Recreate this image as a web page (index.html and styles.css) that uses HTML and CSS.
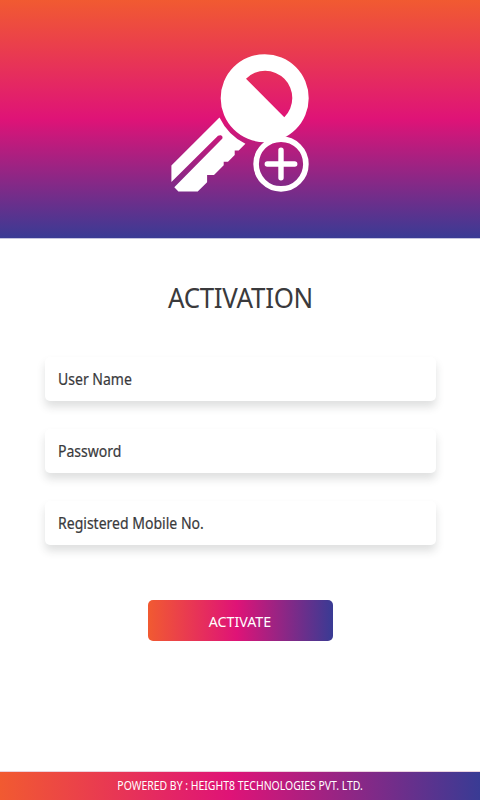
FILE: index.html
```html
<!DOCTYPE html>
<html lang="en">
<head>
<meta charset="utf-8">
<title>Activation</title>
<link rel="stylesheet" href="styles.css">
</head>
<body>
<header class="hero">
<svg class="key" width="142" height="142" viewBox="169 52 142 142" fill="#fff" aria-hidden="true">
<path fill-rule="evenodd" d="M220.7 98.2a44 44 0 1 0 88 0a44 44 0 1 0-88 0ZM246 78.7A27.1 27.1 0 0 1 284.3 117.2Z"/>
<path d="M219.5 117.6L171.4 165.5V182L218 135.8C220.8 134 223.6 136.2 222.2 138.8L174.3 187.3L178.4 191.6H197.7L207.1 182.2V175H214L223.7 165.3V161.7H228L234.7 155V150.5H238.7L245.4 143.7Q228.5 136 219.5 117.6Z"/>
<circle cx="281" cy="164" r="24.9" fill="none" stroke="#fff" stroke-width="5.6"/>
<path d="M267.3 164H294.7M281 150.3V177.7" stroke="#fff" stroke-width="5.4" stroke-linecap="round"/>
</svg>
</header>
<main class="content">
<h1 class="title">ACTIVATION</h1>
<form class="form">
<label class="field"><span class="label">User Name</span></label>
<label class="field"><span class="label">Password</span></label>
<label class="field"><span class="label">Registered Mobile No.</span></label>
<button class="button" type="button"><span class="button-text">ACTIVATE</span></button>
</form>
</main>
<footer class="footer"><span class="footer-text">POWERED BY : HEIGHT8 TECHNOLOGIES PVT. LTD.</span></footer>
</body>
</html>
```
FILE: styles.css
```css
* { box-sizing: border-box; }
body {
  margin: 0;
  height: 800px;
  display: flex;
  flex-direction: column;
  overflow: hidden;
  background: #fff;
  color: #3a3a3c;
  font-family: "Noto Sans", "Open Sans", sans-serif;
}
.hero {
  height: 239px;
  padding: 52px 0 0 169px;
  border-bottom: 1px solid #c4c4df;
  background: linear-gradient(#f15a31, #df1377 50%, #393b94);
  background-clip: padding-box;
}
.key { display: block; }
.content {
  flex: 1;
  display: flex;
  flex-direction: column;
  align-items: center;
}
.title {
  margin: 38px 0 0;
  height: 40px;
  font-size: 28px;
  line-height: 40px;
  font-weight: 400;
  letter-spacing: -0.3px;
  white-space: nowrap;
  transform: scaleX(0.925);
}
.form {
  width: 391px;
  margin-top: 40px;
  display: flex;
  flex-direction: column;
  gap: 28px;
}
.field {
  height: 44px;
  padding-left: 13px;
  border-radius: 5px;
  background: #fff;
  box-shadow: 0 6px 9px rgba(40, 50, 50, 0.15);
  font-size: 15.5px;
  line-height: 45px;
  white-space: nowrap;
}
.label {
  display: inline-block;
  transform: scaleX(0.905);
  transform-origin: left;
  -webkit-text-stroke: 0.2px currentColor;
}
.button {
  align-self: center;
  width: 185px;
  height: 41px;
  margin-top: 27px;
  padding: 0;
  border: 0;
  border-radius: 5px;
  background: linear-gradient(90deg, #f15a31, #df1377 48%, #393b94);
  color: #fff;
  font: 400 15px/43px "Noto Sans", sans-serif;
}
.button-text {
  display: inline-block;
  transform: scaleX(0.95);
}
.footer {
  height: 29px;
  background: linear-gradient(90deg, #f15a31, #df1377 48%, #393b94);
  border-top: 1px solid #ecd3df;
  background-clip: padding-box;
  color: #fff;
  font-size: 12px;
  line-height: 27px;
  text-align: center;
  white-space: nowrap;
}
.footer-text {
  display: inline-block;
  transform: scaleX(0.87);
}
```
